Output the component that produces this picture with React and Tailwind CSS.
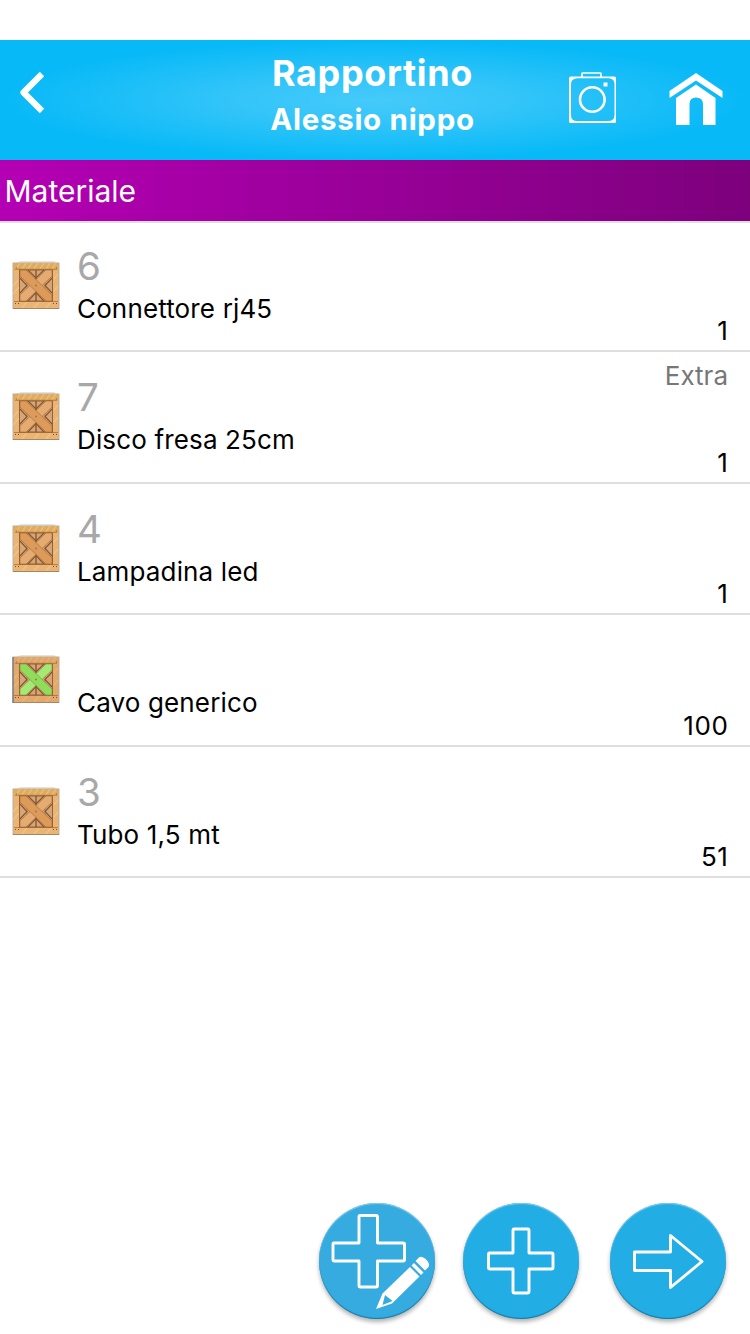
import React from 'react';

const MATERIALS = [
  { code: '6', name: 'Connettore rj45', qty: '1' },
  { code: '7', name: 'Disco fresa 25cm', qty: '1', tag: 'Extra' },
  { code: '4', name: 'Lampadina led', qty: '1' },
  { code: '', name: 'Cavo generico', qty: '100', generic: true },
  { code: '3', name: 'Tubo 1,5 mt', qty: '51' },
];

const BackIcon = () => (
  <svg width="28" height="44" viewBox="0 0 28 44" fill="none">
    <path d="M23 4L4.500 22.500L23 41" stroke="#fff" strokeWidth="6.200" strokeLinejoin="round" />
  </svg>
);

const CameraIcon = () => (
  <svg width="48" height="52" viewBox="0 0 48 52" fill="none">
    <path d="M13 5V1.500Q13 1 14 1H31Q32 1 32 1.500V5" stroke="#fff" strokeWidth="1.700" />
    <path
      fill="#fff"
      fillRule="evenodd"
      d="M2 4.500H45.500Q47 4.500 47 6V49.500Q47 51 45.500 51H1.500Q0 51 0 49.500V6Q0 4.500 2 4.500ZM8 6.200Q2 7 2 12V43Q2 49 8 49H39Q45.500 49 45.500 43V12Q45.500 7 40 6.200Z"
    />
    <circle cx="23.300" cy="27.500" r="12.300" stroke="#fff" strokeWidth="2.600" />
    <rect x="34.500" y="10.500" width="4" height="4" fill="#fff" />
  </svg>
);

const HomeIcon = () => (
  <svg width="54" height="53" viewBox="0 0 54 53" fill="#fff">
    <path d="M27 0L53.500 18V25L27 7.500L0.500 25V18Z" />
    <path d="M27 11.500L46.500 25V52H34V31Q34 24.500 27 24.500Q20.500 24.500 20.500 31V52H7V25Z" />
  </svg>
);

const CrateIcon = ({ generic }) => {
  const front = generic ? '#8fdd58' : '#dd9a58';
  const back = generic ? '#a5e872' : '#e5ab70';
  const edge = generic ? '#7f8a4c' : '#a06a38';
  return (
    <svg width="48" height="50" viewBox="0 0 48 50" fill="none">
      <path d="M1 4L9 1H42L47 4Z" fill="#e6e3dc" />
      <rect x="1" y="3" width="46" height="45.500" fill={generic ? '#e3a86c' : '#eab574'} stroke="#b3aba2" strokeWidth="0.900" />
      <rect x="1.500" y="3" width="45" height="6.500" fill={generic ? '#e0a668' : '#dfab5e'} />
      <path
        d="M4 9L8 3M10 9L14 3M16 9L20 3M22 9L26 3M28 9L32 3M34 9L38 3M40 9L44 3M1 26L6 20M1 34L7 27M42 19L46 14M42 31L46 26M10 48L15 42M22 48L27 42M34 48L39 42"
        stroke="#f2cd93"
        strokeWidth="1.500"
        strokeOpacity={generic ? '0.3' : '0.5'}
      />
      <path d="M3 9.300H45M2 41.500H46" stroke="#ad6f38" strokeWidth="0.800" />
      <rect x="7.500" y="10" width="33" height="31" fill="#d8a577" stroke="#8b5a30" strokeWidth="0.900" />
      <path d="M24 10V41" stroke="#7a4d2a" strokeWidth="1.200" />
      <path d="M15 10V41M33 10V41" stroke="#b27d50" strokeWidth="0.900" />
      <path d="M16 41L24 32.500L32 41M8 18L15 25.500L8 33M40 18L33 25.500L40 33M16 10L24 18L32 10" stroke="#7f5430" strokeWidth="1.100" />
      <path d="M8 35L34 10H40V16L14 41H8Z" fill={back} stroke={edge} strokeWidth="0.600" />
      <path d="M8 10H14L40 35V41H34L8 16Z" fill={front} stroke={edge} strokeWidth="0.600" />
      <circle cx="24" cy="25.500" r="1" fill="#8b7d6a" />
      <path d="M3 43.500h1M6 43.500h1M41 43.500h1M44 43.500h1M4 8h.8M44 8h.8" stroke="#7e4c20" strokeWidth="1.200" />
      <path d="M1 48.500H47" stroke="#a88660" strokeWidth="1" />
      {generic && <path d="M1 3V49" stroke="#687078" strokeWidth="1.200" />}
    </svg>
  );
};

const AddEditIcon = () => (
  <svg width="116" height="116" viewBox="0 0 116 116" fill="none">
    <path d="M41 12.500H57Q58.500 12.500 58.500 14V40H84Q85.500 40 85.500 41V57Q85.500 58 84 58H58.500V83Q58.500 84 57 84H41Q40 84 40 83V58H15Q14 58 14 57V41Q14 40 15 40H40V14Q40 12.500 41 12.500Z" stroke="#fff" strokeWidth="2.900" strokeLinejoin="round" />
    <path d="M91 64L100.500 73.500L73 100.500L57 106L63.500 90.500ZM66 92L63.500 102L73.500 98Z" fill="#fff" fillRule="evenodd" />
    <path d="M92.500 62.500L95 60L104.500 69.500L102 72Z" fill="#fff" />
    <path d="M96.500 58L100 54.500Q102 52.500 106 55.500L108.500 58Q111 61.500 109.500 64L106 67.500Z" fill="#fff" />
  </svg>
);

const AddIcon = () => (
  <svg width="116" height="116" viewBox="0 0 116 116" fill="none">
    <path d="M51 26H65Q66 26 66 27V50H89Q90 50 90 51V65Q90 66 89 66H66V89Q66 90 65 90H51Q50 90 50 89V66H26.500Q25.500 66 25.500 65V51Q25.500 50 26.500 50H50V27Q50 26 51 26Z" stroke="#fff" strokeWidth="2.900" strokeLinejoin="round" />
  </svg>
);

const NextIcon = () => (
  <svg width="116" height="116" viewBox="0 0 116 116" fill="none">
    <path d="M24.500 49H60.500V32.500L92 58.500L60.500 84.500V67.500H24.500Z" stroke="#fff" strokeWidth="2.900" strokeLinejoin="round" />
  </svg>
);

const RoundButton = ({ className, label, children }) => (
  <button
    aria-label={label}
    className={`size-[116px] rounded-full shadow-[0_3px_4px_rgba(0,0,0,0.3),inset_0_-1px_1px_#16799f,inset_0_1px_1px_#8bcdec] ${className}`}
  >
    {children}
  </button>
);

const MaterialRow = ({ item }) => (
  <li className="flex h-[131.4px] border-b-2 border-[#dedede] pl-[12.4px] pr-[22px]">
    <div className="pt-[39px]">
      <CrateIcon generic={item.generic} />
    </div>
    <div className="ml-[16.6px] flex-1 pt-[21px]">
      <div className="h-[47px] text-[38.5px] leading-[48px] text-[#a8a8a8]">{item.code}</div>
      <div className="text-[26px] leading-[40px] tracking-[0.15px]">{item.name}</div>
    </div>
    <div className="flex flex-col justify-between pt-[8px] text-right text-[26px] leading-[32px]">
      <div className="h-8 text-[#777777]">{item.tag}</div>
      <div className="-mr-[0.5px] pb-[3px] tracking-[0.6px]">{item.qty}</div>
    </div>
  </li>
);

const App = () => (
  <div className="flex h-[1334px] w-[750px] flex-col overflow-hidden bg-white pt-10 font-['Inter','Liberation_Sans',sans-serif] text-black">
    <header className="flex h-[120px] shrink-0 bg-[#07b9f7] bg-[radial-gradient(ellipse_375px_60px_at_50%_50%,#45cafa_0%,#35c5f9_35%,#07b9f7_100%)] text-white">
      <button aria-label="Indietro" className="w-[200px] pb-[16px] pl-[19px]">
        <BackIcon />
      </button>
      <div className="w-[345px] pt-[11px] text-center font-bold">
        <h1 className="text-[36px] leading-[44px] tracking-[0.65px]">Rapportino</h1>
        <h2 className="mt-[6px] text-[29.5px] leading-[36px] tracking-[0.7px]">Alessio nippo</h2>
      </div>
      <div className="flex items-start pl-6 pt-8">
        <CameraIcon />
        <div className="ml-[52px] mt-[1px]">
          <HomeIcon />
        </div>
      </div>
    </header>

    <div className="h-[63px] shrink-0 border-b-2 border-[#e0dfe0] bg-linear-to-r from-[#b400b4] to-[#7d007d] bg-clip-padding pl-[4.5px] text-[30px] leading-[62px] text-white">
      Materiale
    </div>

    <ul className="-mt-[2px] flex-1">
      {MATERIALS.map((item) => (
        <MaterialRow key={item.name} item={item} />
      ))}
    </ul>

    <footer className="flex h-[131px] shrink-0 justify-end pr-[24px]">
      <RoundButton label="Aggiungi e modifica" className="mr-[28px] bg-[#36abe0]">
        <AddEditIcon />
      </RoundButton>
      <RoundButton label="Aggiungi" className="mr-[31px] bg-[#22ade5]">
        <AddIcon />
      </RoundButton>
      <RoundButton label="Avanti" className="bg-[#22ade5]">
        <NextIcon />
      </RoundButton>
    </footer>
  </div>
);

export default App;
